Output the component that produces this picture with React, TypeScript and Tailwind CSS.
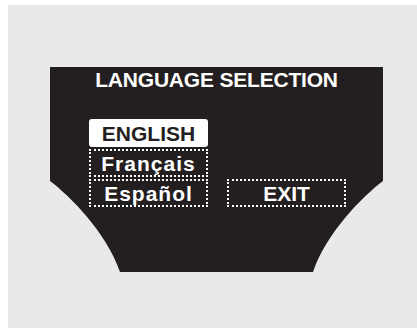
import React from "react";

const font = { fontFamily: '"Liberation Sans", Arial, sans-serif' };

export default function App() {
  return (
    <div className="w-[417px] h-[329px] bg-white pl-[8px] pt-[5px]" style={font}>
      <div className="w-full h-[323px] bg-[#e9e9e9] pt-[62px] pl-[42px]">
        <div className="relative w-[333px] h-[205px]">
          <svg
            className="absolute inset-0"
            width="333"
            height="205"
            viewBox="0 0 333 205"
          >
            <path
              d="M0 0 H333 V114 C313 129 276 166 263 205 H70 C57 166 20 129 0 114 Z"
              fill="#231f20"
            />
          </svg>
          <div className="relative flex flex-col">
            <div className="mt-[2px] h-[21px] text-center text-[21px] leading-none font-bold text-white tracking-[-0.2px]">
              LANGUAGE SELECTION
            </div>
            <div className="mt-[29px] ml-[39px] grid grid-cols-[119px_119px] auto-rows-[28px] gap-x-[19px] gap-y-[2px]">
              <div className="flex items-center justify-center rounded-[3px] bg-white text-[21px] font-bold leading-none text-[#231f20]">
                ENGLISH
              </div>
              <div />
              <div className="flex items-center justify-center border-2 border-dotted border-white text-[21px] font-bold leading-none text-white tracking-[1px]">
                Français
              </div>
              <div />
              <div className="flex items-center justify-center border-2 border-dotted border-white text-[21px] font-bold leading-none text-white tracking-[1px]">
                Español
              </div>
              <div className="flex items-center justify-center border-2 border-dotted border-white text-[21px] font-bold leading-none text-white">
                EXIT
              </div>
            </div>
          </div>
        </div>
      </div>
    </div>
  );
}
